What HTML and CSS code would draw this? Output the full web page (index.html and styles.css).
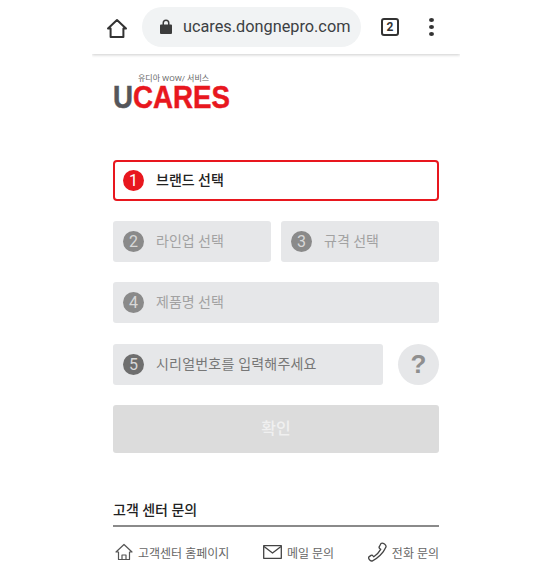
FILE: index.html
```html
<!DOCTYPE html>
<html lang="ko">
<head>
    <meta charset="UTF-8">
    <meta name="viewport" content="width=device-width, initial-scale=1.0">
    <title>UCARES</title>
    <link rel="stylesheet" href="styles.css">
</head>
<body>
    <div class="phone">
        <header class="toolbar">
            <svg class="home-icon" width="22" height="22" viewBox="0 0 22 22" fill="none" stroke="#333" stroke-width="2" stroke-linejoin="round">
                <path d="M2 11.500 11 3l9 8.500h-2.600V20H4.600v-8.500z"/>
            </svg>
            <div class="address">
                <svg class="lock-icon" width="12" height="15" viewBox="0 0 12 15">
                    <path fill="#3c3c3c" d="M2.500 5.500V4a3.500 3.500 0 0 1 7 0v1.500H11a1 1 0 0 1 1 1V14a1 1 0 0 1-1 1H1a1 1 0 0 1-1-1V6.500a1 1 0 0 1 1-1zM4 5.500h4V4a2 2 0 0 0-4 0z"/>
                </svg>
                <span class="url">ucares.dongnepro.com</span>
            </div>
            <div class="tabs">2</div>
            <div class="menu"><i></i><i></i><i></i></div>
        </header>

        <main class="content">
            <div class="logo">
                <div class="logo-sub">유디아 WOW/ 서비스</div>
                <div class="logo-main"><span class="logo-u">U</span>CARES</div>
            </div>

            <form class="steps">
                <div class="field active"><span class="num">1</span><span class="label">브랜드 선택</span></div>
                <div class="row">
                    <div class="field"><span class="num">2</span><span class="label">라인업 선택</span></div>
                    <div class="field"><span class="num">3</span><span class="label">규격 선택</span></div>
                </div>
                <div class="field"><span class="num">4</span><span class="label">제품명 선택</span></div>
                <div class="row serial">
                    <div class="field"><span class="num">5</span><span class="label">시리얼번호를 입력해주세요</span></div>
                    <div class="help">?</div>
                </div>
                <button type="button" class="confirm">확인</button>
            </form>

            <section class="support">
                <h2>고객 센터 문의</h2>
                <div class="links">
                    <a class="link">
                        <svg width="18" height="18" viewBox="0 0 18 18" fill="none" stroke="#555" stroke-width="1.200" stroke-linejoin="round">
                            <path d="M1 9 9 1.500 17 9h-2.500v7.500h-11V9z"/>
                            <path d="M7 16.500V12h4v4.500"/>
                        </svg>
                        고객센터 홈페이지
                    </a>
                    <a class="link">
                        <svg width="19" height="14" viewBox="0 0 19 14" fill="none" stroke="#444" stroke-width="1.300" stroke-linejoin="round">
                            <rect x="0.700" y="0.700" width="17.600" height="12.600"/>
                            <path d="M1 1.500 9.500 8 18 1.500"/>
                        </svg>
                        메일 문의
                    </a>
                    <a class="link">
                        <svg width="19" height="20" viewBox="0 0 19 20" fill="none" stroke="#444" stroke-width="1.300" stroke-linejoin="round">
                            <path d="M13 1.500c1-.8 2-.5 3.500.6 1.500 1.200 2 2.100 1.300 3.200C15.500 11 9.500 16.500 4.500 18.800c-1.200.5-2.400-.2-3.300-1.500-.8-1.100-.8-2 .1-2.700l1.700-1.200c.8-.5 1.500-.3 2 .4l.8 1c2.700-1.800 5.200-4.600 6.900-7.500l-1-.8c-.7-.6-.8-1.300-.3-2z"/>
                        </svg>
                        전화 문의
                    </a>
                </div>
            </section>
        </main>
    </div>
</body>
</html>
```

FILE: styles.css
```css
body {
    margin: 0;
    background-color: #fff;
    font-family: Roboto, "Noto Sans CJK KR", sans-serif;
    color: #333;
}
.phone {
    width: 368px;
    height: 566px;
    margin-left: 92px;
    overflow: hidden;
}

/* browser bar */
.toolbar {
    display: flex;
    align-items: center;
    height: 54px;
    box-shadow: 0 1px 3px rgba(0, 0, 0, 0.2);
}
.home-icon {
    margin-left: 14px;
    margin-top: 1px;
}
.address {
    display: flex;
    align-items: center;
    width: 219px;
    height: 40px;
    margin-left: 14px;
    margin-top: -1px;
    border-radius: 20px;
    background-color: #f1f3f4;
    box-sizing: border-box;
    padding-left: 18px;
}
.url {
    margin-left: 11px;
    font-size: 16.300px;
    color: #3c4043;
    white-space: nowrap;
}
.tabs {
    width: 14px;
    height: 14px;
    margin-left: 20px;
    border: 2px solid #333;
    border-radius: 3px;
    font-size: 12px;
    font-weight: 700;
    line-height: 14px;
    text-align: center;
}
.menu {
    display: flex;
    flex-direction: column;
    gap: 3px;
    margin-left: 30px;
}
.menu i {
    width: 5px;
    height: 4px;
    border-radius: 50%;
    background-color: #333;
}

.content {
    padding: 20px 21px 0;
}

/* logo */
.logo {
    height: 86px;
}
.logo-sub {
    padding-left: 25px;
    font-size: 8px;
    line-height: 10px;
    color: #666;
}
.logo-main {
    display: inline-block;
    margin-top: 1px;
    font-family: "Liberation Sans", sans-serif;
    font-size: 32px;
    font-weight: 700;
    line-height: 24px;
    color: #e8171e;
    -webkit-text-stroke: 0.500px #e8171e;
    transform: scaleX(0.865);
    transform-origin: left center;
}
.logo-u {
    color: #55565a;
    -webkit-text-stroke: 0.500px #55565a;
}

/* form */
.steps {
    display: flex;
    flex-direction: column;
    gap: 20px;
}
.row {
    display: flex;
    gap: 10px;
}
.row .field {
    flex: 1;
}
.field {
    display: flex;
    align-items: center;
    height: 41px;
    box-sizing: border-box;
    padding-left: 10px;
    border-radius: 3px;
    background-color: #e6e7e9;
    font-size: 14px;
    color: #a2a2a2;
}
.field.active {
    border: 2px solid #e8171e;
    border-radius: 4px;
    padding-left: 8px;
    background-color: #fff;
    font-weight: 500;
    color: #222;
}
.label {
    margin-top: -3px;
}
.num {
    display: flex;
    align-items: center;
    justify-content: center;
    flex: none;
    width: 21px;
    height: 21px;
    margin-right: 12px;
    border-radius: 50%;
    background-color: #8a8a8a;
    font-size: 16px;
    font-weight: 400;
    color: #d8d8d8;
}
.active .num {
    background-color: #e8171e;
    color: #fff;
}
.serial {
    gap: 15px;
    margin-top: 1px;
}
.serial .field {
    color: #777;
    letter-spacing: 0.200px;
}
.serial .num {
    background-color: #6e6e6e;
}
.help {
    flex: none;
    width: 41px;
    height: 41px;
    border-radius: 50%;
    background-color: #e6e7e9;
    font-family: "Liberation Sans", sans-serif;
    font-size: 26px;
    font-weight: 700;
    line-height: 41px;
    text-align: center;
    color: #8f8f8f;
}
.confirm {
    height: 48px;
    padding-bottom: 5px;
    border: none;
    border-radius: 3px;
    background-color: #dcdcdc;
    font-family: inherit;
    font-size: 16px;
    font-weight: 500;
    color: #f0f0f0;
}

/* customer center */
.support {
    margin-top: 47px;
}
.support h2 {
    margin: 0;
    padding-bottom: 5px;
    border-bottom: 2px solid #8a8a8a;
    font-size: 14px;
    font-weight: 500;
    line-height: 20px;
    color: #222;
}
.links {
    display: flex;
    justify-content: space-between;
    margin-top: 15px;
}
.link {
    display: flex;
    align-items: center;
    gap: 5px;
    font-size: 12px;
    color: #666;
}
.link:first-child {
    margin-left: 2px;
}
```
